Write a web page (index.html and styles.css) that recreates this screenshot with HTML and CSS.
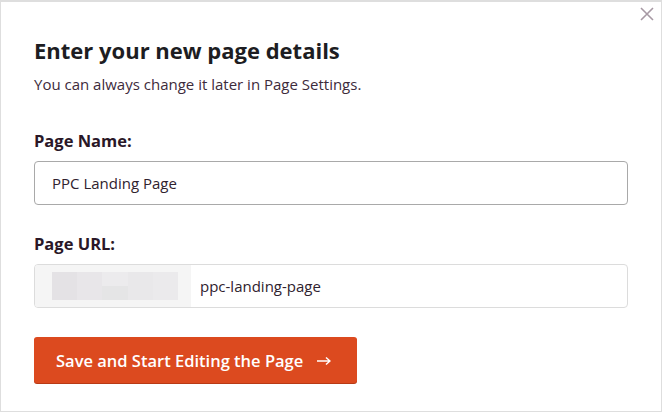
FILE: index.html
```html
<!DOCTYPE html>
<html>
<head>
<meta charset="utf-8">
<link rel="stylesheet" href="styles.css">
</head>
<body>
<div class="modal">
  <button class="close" aria-label="Close">
    <svg width="14" height="14" viewBox="0 0 14 14"><path d="M1 1L13 13M13 1L1 13" stroke="#a799a4" stroke-width="1.6" fill="none"/></svg>
  </button>
  <h1 class="title">Enter your new page details</h1>
  <p class="subtitle">You can always change it later in Page Settings.</p>
  <label class="label label-first">Page Name:</label>
  <div class="input">PPC Landing Page</div>
  <label class="label">Page URL:</label>
  <div class="input url">
    <div class="prefix">
      <div class="blur">
        <span class="c1"></span><span class="c2"></span><span class="c3"></span><span class="c4"></span><span class="c5"></span>
        <span class="c1"></span><span class="c2"></span><span class="c6"></span><span class="c4"></span><span class="c5"></span>
      </div>
    </div>
    <div class="slug">ppc-landing-page</div>
  </div>
  <button class="save">Save and Start Editing the Page<svg class="arrow" width="14" height="10" viewBox="0 0 14 10"><path d="M0 5H13M9 1.5L13 5L9 8.5" stroke="#ffffff" stroke-width="1.5" fill="none"/></svg></button>
</div>
</body>
</html>
```
FILE: styles.css
```css
html, body {
  margin: 0;
  padding: 0;
  background: #ffffff;
}
body {
  font-family: "Open Sans", "Liberation Sans", sans-serif;
}
.modal {
  position: relative;
  box-sizing: border-box;
  width: 662px;
  height: 412px;
  border: 1px solid #dedede;
  border-top-width: 2px;
  padding: 33px 33px 0 33px;
  display: flex;
  flex-direction: column;
  align-items: flex-start;
}
.close {
  position: absolute;
  top: 5px;
  right: 7px;
  width: 14px;
  height: 14px;
  padding: 0;
  border: 0;
  background: none;
  display: flex;
}
.title {
  margin: 0;
  font-size: 22px;
  line-height: 30px;
  font-weight: 700;
  color: #1d1d22;
}
.subtitle {
  margin: 9px 0 0 0;
  font-size: 15px;
  line-height: 20px;
  color: #3d2b3b;
}
.label {
  display: block;
  font-size: 16.5px;
  line-height: 22px;
  font-weight: 700;
  color: #2a1727;
  margin-top: 28px;
}
.label-first {
  margin-top: 36px;
}
.input {
  box-sizing: border-box;
  width: 594px;
  height: 44px;
  margin-top: 9px;
  border: 1px solid #a9a9a9;
  border-radius: 4px;
  padding: 0 17px;
  display: flex;
  align-items: center;
  font-size: 15px;
  color: #2f222e;
}
.input.url {
  border-color: #dcdcdc;
  padding: 0;
}
.prefix {
  width: 156px;
  align-self: stretch;
  background: #f5f5f5;
  border-radius: 3px 0 0 3px;
  display: flex;
  align-items: center;
  padding-left: 17px;
  box-sizing: border-box;
}
.blur {
  width: 126px;
  height: 28px;
  display: grid;
  grid-template-columns: repeat(5, 1fr);
  grid-template-rows: 1fr 1fr;
  filter: blur(0.6px);
}
.blur span { display: block; }
.c1 { background: #e4e2e5; }
.c2 { background: #e8e6e9; }
.c3 { background: #ecebed; }
.c4 { background: #e9e8ea; }
.c5 { background: #ebeaec; }
.c6 { background: #e5e5e6; }
.slug {
  padding-left: 9px;
  font-size: 15px;
  color: #2f222e;
}
.save {
  margin-top: 29px;
  width: 323px;
  height: 46px;
  border: 0;
  border-radius: 3px;
  background: #dc4a1f;
  box-shadow: 0 1px 0 #b83a15;
  color: #ffffff;
  font-family: "Open Sans", "Liberation Sans", sans-serif;
  font-size: 16.5px;
  font-weight: 600;
  padding: 0 0 0 22px;
  display: flex;
  align-items: center;
}
.arrow {
  margin-left: 14px;
  margin-top: 1px;
}
```
